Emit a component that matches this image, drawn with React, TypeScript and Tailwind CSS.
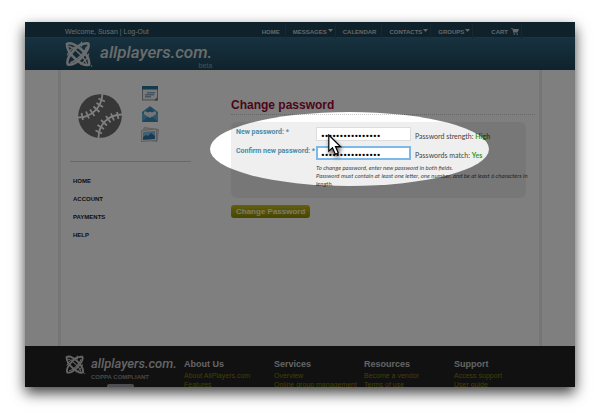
import React from "react";

const navItems = [
  { label: "HOME", menu: false },
  { label: "MESSAGES", menu: true },
  { label: "CALENDAR", menu: false },
  { label: "CONTACTS", menu: true },
  { label: "GROUPS", menu: true },
];

const sideItems = ["HOME", "ACCOUNT", "PAYMENTS", "HELP"];

const footerColumns = [
  { title: "About Us", links: ["About AllPlayers.com", "Features"] },
  { title: "Services", links: ["Overview", "Online group management"] },
  { title: "Resources", links: ["Become a vendor", "Terms of use"] },
  { title: "Support", links: ["Access support", "User guide"] },
];

function LogoMark({ className }: { className: string }) {
  return (
    <svg viewBox="0 0 28 28" className={className} fill="none" stroke="currentColor" aria-hidden="true">
      <path d="M1.500 3C8 -1 26 14 24.500 24.500C18 27.500 1 13 1.500 3Z" strokeWidth="2.600" />
      <path d="M3 5.500C8 6 20 17 22 24" strokeWidth="1.500" />
      <path d="M23.500 2.500C26.500 8 12 26 2.500 24.500C-.5 18 13 1 23.500 2.500Z" strokeWidth="2.600" />
      <path d="M22 6C20 12 11 21 5 22.500" strokeWidth="1.500" />
      <path d="M2 15C3 11 6 8 10 6M15 24C19 22 23 18 24 13" strokeWidth="1.400" />
      <path d="M16.500 0l1 2.500 2.500 1-2.500 1-1 2.500-1-2.500-2.500-1 2.500-1z" fill="currentColor" stroke="none" />
      <circle cx="27" cy="26" r=".8" fill="currentColor" stroke="none" />
    </svg>
  );
}

function Baseball() {
  return (
    <svg viewBox="0 0 44 44" className="h-11 w-11" aria-hidden="true">
      <circle cx="22" cy="22" r="21.800" fill="#6e6e6e" />
      <g fill="none" stroke="#fff" strokeWidth="1.800">
        <path d="M24.500 -1C24 13 14 24 -1 23.500" />
        <path d="M45 20.500C30 20 20 31 20.500 45" />
        <path d="M20.500 4.500l6.500 3M18.500 9l6.500 4M15.500 12.500l6 5.500M12 15.500l4.500 6.500M8 17.500l3 7M3.500 19l1.500 7" />
        <path d="M39 18l1.500 7M33 19.500l3 7M28 22l4.500 6.500M23 26l6 5.500M19.500 31l6.500 4M17.500 36.500l6.500 3" />
      </g>
    </svg>
  );
}

function CalendarIcon() {
  return (
    <svg viewBox="0 0 16 15" className="h-[15px] w-4" aria-hidden="true">
      <rect x=".5" y=".5" width="15" height="13.500" fill="#f2f2f2" stroke="#999" />
      <path d="M0 0h16v3.500H0z" fill="#287499" />
      <path d="M5 6h8v1.500H5zM3 8h9v1.500H3zM3 10h6v1.500H3z" fill="#86a9c5" />
      <path d="M12 14.500l3.500-3.500v3.500z" fill="#777" />
    </svg>
  );
}

function MailIcon() {
  return (
    <svg viewBox="0 0 16 16" className="h-4 w-4" aria-hidden="true">
      <path d="M0 6l8-6 8 6v10H0z" fill="#4b9bc6" />
      <path d="M2 5.500h12V10l-6 3-6-3z" fill="#e8eef2" />
      <path d="M4 5.500L8 1l4 4.500-2 1-2-1-2 1z" fill="#3f8fb9" />
      <path d="M0 6.500L6 11 0 16zM16 6.500L10 11l6 5z" fill="#5faad1" />
      <path d="M0 16l6-5.500 2 1.500 2-1.500 6 5.500z" fill="#3a8dbb" />
    </svg>
  );
}

function PhotosIcon() {
  return (
    <svg viewBox="0 0 18 16" className="h-4 w-[18px]" aria-hidden="true">
      <path d="M3 .5l14.500 2-1.500 12L1.500 12z" fill="#ddd" stroke="#aaa" strokeWidth=".7" />
      <path d="M.5 3.500L15.500 2v11.500l-15 1z" fill="#f3f3f3" stroke="#aaa" strokeWidth=".7" />
      <path d="M2 5l12-1v8L2 12.800z" fill="#88bfe0" />
      <path d="M2 10l3-2 2 1 3-3 4 3v3L2 12.800z" fill="#2c77a4" />
    </svg>
  );
}

function CartIcon() {
  return (
    <svg viewBox="0 0 8 7" className="h-[7px] w-2" fill="currentColor" aria-hidden="true">
      <path d="M0 .2h1.800l.4.800H8L6.800 4H2.900l.2.600h3.700v.6H2.500L1.300.9H0z" />
      <circle cx="3.200" cy="6.200" r=".7" />
      <circle cx="6.200" cy="6.200" r=".7" />
    </svg>
  );
}

function Pointer() {
  return (
    <svg
      viewBox="0 0 14 22"
      className="pointer-events-none absolute top-[64px] left-[97px] z-20 h-[22px] w-[14px] drop-shadow-[1px_3px_2px_rgba(0,0,0,0.6)]"
      aria-hidden="true"
    >
      <path d="M.8 1v16.200l3.700-3.500 2.800 6.600 3-1.300-2.800-6.300h5.200z" fill="#fff" stroke="#000" strokeWidth="1.200" />
    </svg>
  );
}

function TopBar() {
  return (
    <div className="flex h-[15px] items-center justify-between bg-[#1e4456] pt-1 pr-[53px] pl-10 text-[#d0d8dc]">
      <p className="text-[7px] leading-[8px] whitespace-nowrap">
        Welcome, Susan | <a href="#logout">Log-Out</a>
      </p>
      <nav className="flex h-[15px] items-center text-[6px] leading-[8px] font-bold text-[#c6ced2]">
        {navItems.map((item) => (
          <a
            key={item.label}
            href={"#" + item.label.toLowerCase()}
            className={"flex h-full items-center border-r border-[#32505e] " + (item.menu ? "gap-[1px] pr-[2px] pl-[7px]" : "pr-[5px] pl-[7px]")}
          >
            {item.label}
            {item.menu && (
              <svg viewBox="0 0 5 3" className="mb-[2px] h-[3px] w-[5px]" fill="currentColor" aria-hidden="true">
                <path d="M0 0h5L2.500 3z" />
              </svg>
            )}
          </a>
        ))}
        <a href="#cart" className="flex h-full items-center gap-[3px] border-r border-[#32505e] pr-[2px] pl-[18px]">
          CART
          <CartIcon />
        </a>
      </nav>
    </div>
  );
}

function Field({ id, label, status, value, active }: { id: string; label: string; status: string; value: string; active: boolean }) {
  return (
    <div className="flex items-start">
      <label htmlFor={id} className="w-20 shrink-0 pt-[1px] font-['Roboto',sans-serif] text-[7px] leading-[8px] font-bold whitespace-nowrap text-[#4a8ba6]">
        {label} *
      </label>
      <input
        id={id}
        type="password"
        defaultValue="passwordpassword"
        className={
          "h-[14px] w-[95px] bg-white pt-[4px] font-['Roboto',sans-serif] text-[11px] leading-[9px] text-black outline-none " +
          (active ? "border-2 border-[#7db9e8] pl-[3px]" : "border border-[#dddddd] pl-[4px]")
        }
      />
      <p className="pt-[5px] pl-1 font-['Lato',sans-serif] text-[7px] leading-[8px] whitespace-nowrap text-[#444]">
        {status}: <strong className="text-[#3a9a10]">{value}</strong>
      </p>
    </div>
  );
}

function PasswordForm() {
  return (
    <form className="relative min-w-0 flex-1 pt-7" onSubmit={(e) => e.preventDefault()}>
      <h1 className="border-b border-dotted border-[#ccc] pb-[1px] text-[12px] leading-[15px] font-bold text-[#9b0a35]">Change password</h1>
      <div className="relative mt-[7px] mr-[9px] h-[76px] rounded-md bg-[#efefef] pt-[5px] pl-[5px]">
        <div className="flex flex-col gap-[5px]">
          <Field id="new-password" label="New password:" status="Password strength" value="High" active={false} />
          <Field id="confirm-password" label="Confirm new password:" status="Passwords match" value="Yes" active={true} />
        </div>
        <p className="mt-[4px] ml-20 font-['Lato',sans-serif] text-[6px] leading-[8px] whitespace-nowrap text-[#444] italic">
          To change password, enter new password in both fields.
          <br />
          Password must contain at least one letter, one number, and be at least 6 characters in
          <br />
          length.
        </p>
        <div className="pointer-events-none absolute -top-[10px] -left-[21px] z-10 h-[74px] w-[279px] rounded-[50%] shadow-[0_0_0_2000px_rgba(0,0,0,0.5)]" />
      </div>
      <button
        type="submit"
        className="mt-[7px] block h-[13px] rounded-[3px] bg-linear-to-b from-[#c9bf1c] to-[#8f8a00] px-[5px] text-[8px] leading-[12px] font-bold text-[#f5f3d8]"
      >
        Change Password
      </button>
      <Pointer />
    </form>
  );
}

export default function App() {
  return (
    <div className="bg-white px-[25px] pt-[22px] pb-[33px] font-['Liberation_Sans',Arial,sans-serif]">
      <div className="shadow-[0_6px_13px_0_rgba(0,0,0,0.75)]">
        <div className="relative overflow-hidden bg-white">
          <TopBar />
          <header className="flex h-[33px] items-start border-t border-[#3d6878] bg-linear-to-b from-[#2e6480] to-[#1f4659] pl-10 text-[#d4d8da]">
            <LogoMark className="mt-[3px] h-[27px] w-[28px]" />
            <a href="#home" className="ml-[7px] flex flex-col items-end pt-1 font-['Roboto',sans-serif] text-[17px] leading-[20px] font-medium italic">
              allplayers.com.
              <span className="font-['Liberation_Sans',sans-serif] text-[7px] leading-[8px] font-normal text-[#8fa3ae] not-italic">beta</span>
            </a>
          </header>
          <main className="px-[33px]">
            <div className="flex min-h-[276px] border-x-[3px] border-[#ececec] pr-1 pl-[9px]">
              <aside className="mr-10 w-[121px] shrink-0">
                <div className="flex h-[92px] gap-[19px] border-b border-[#d0d0d0] pt-4 pl-[8px]">
                  <div className="pt-2">
                    <Baseball />
                  </div>
                  <div className="flex flex-col items-center gap-[5px]">
                    <CalendarIcon />
                    <MailIcon />
                    <PhotosIcon />
                  </div>
                </div>
                <ul className="pt-[10px] pl-[3px] text-[6px] leading-[18px] font-bold text-[#222]">
                  {sideItems.map((item) => (
                    <li key={item}>
                      <a href={"#" + item.toLowerCase()}>{item}</a>
                    </li>
                  ))}
                </ul>
              </aside>
              <PasswordForm />
            </div>
          </main>
          <footer className="flex h-[41px] overflow-hidden bg-[#222] pr-[31px] pl-10">
            <div className="flex w-[119px] shrink-0 items-start gap-[5px] pt-[9px] text-[#c8c8c8]">
              <LogoMark className="h-5 w-[21px] shrink-0" />
              <div>
                <p className="font-['Roboto',sans-serif] text-[13px] leading-[18px] font-medium italic">allplayers.com.</p>
                <p className="text-[6px] leading-[8px] font-bold whitespace-nowrap text-[#909090]">COPPA COMPLIANT</p>
                <div className="mt-[3px] ml-4 h-5 w-[27px] rounded-[2px] bg-[#999ca4]" />
              </div>
            </div>
            <div className="grid flex-1 grid-cols-4 pt-[12px]">
              {footerColumns.map((col) => (
                <section key={col.title}>
                  <h2 className="text-[9px] leading-[12px] font-bold text-[#c8c8c8]">{col.title}</h2>
                  <ul className="pt-[1px] text-[7px] leading-[9px] whitespace-nowrap text-[#867e0c]">
                    {col.links.map((link) => (
                      <li key={link}>
                        <a href="#more">{link}</a>
                      </li>
                    ))}
                  </ul>
                </section>
              ))}
            </div>
          </footer>
        </div>
      </div>
    </div>
  );
}
